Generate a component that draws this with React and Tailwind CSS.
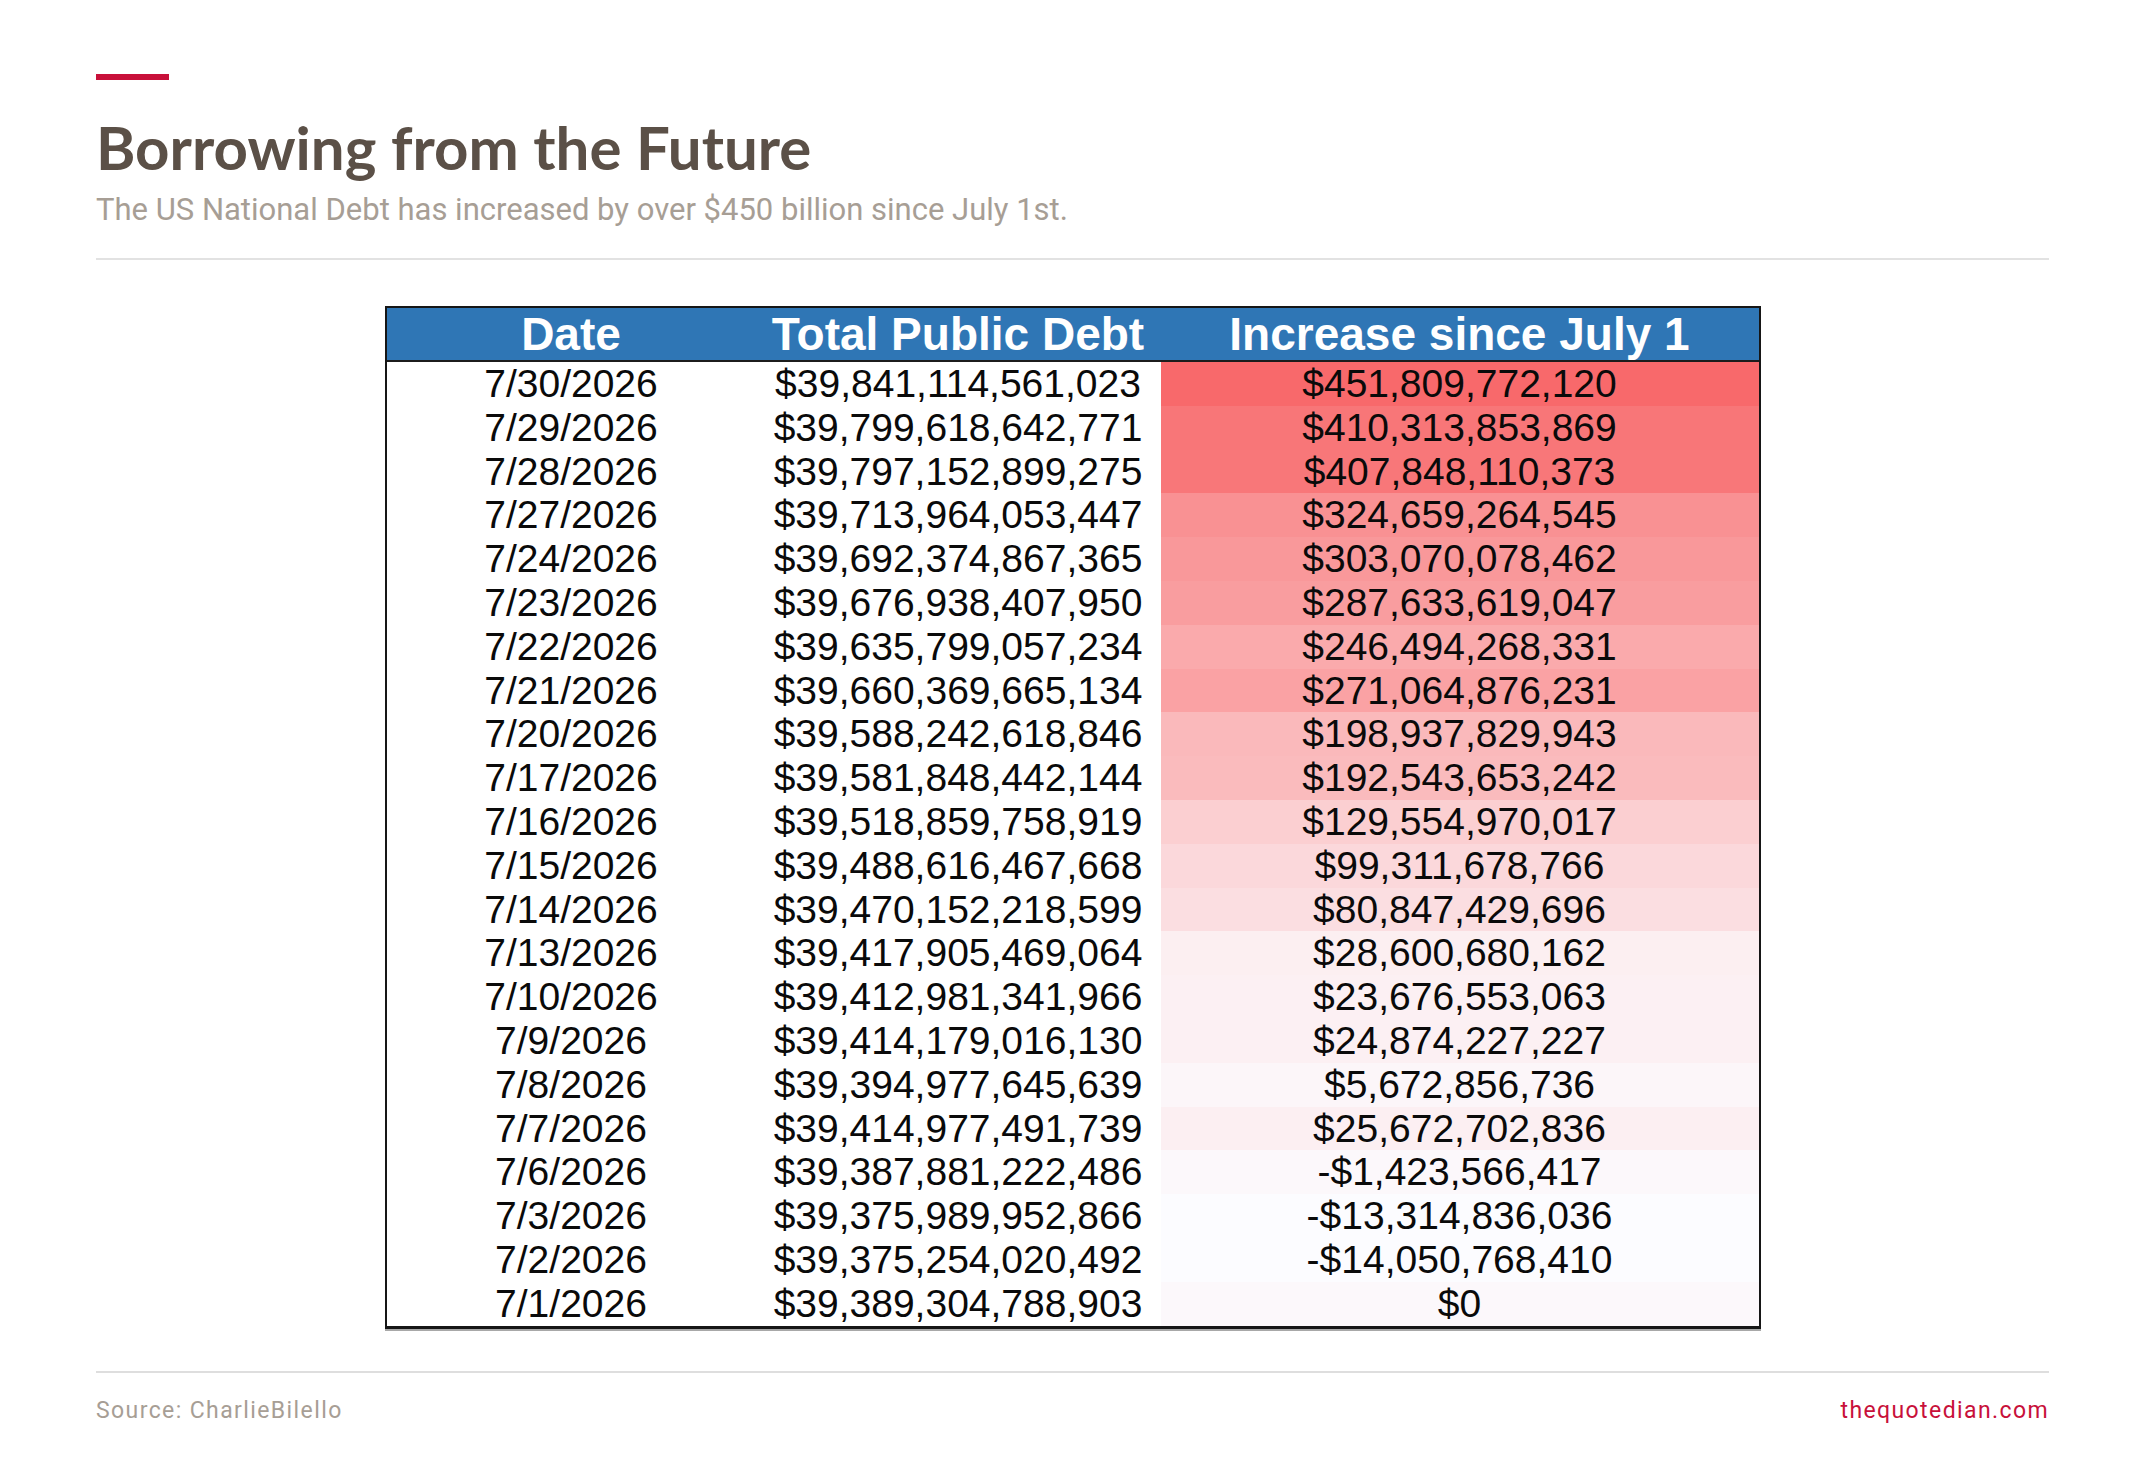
const rows = [
  ["7/30/2026", "$39,841,114,561,023", "$451,809,772,120", 451.809772120],
  ["7/29/2026", "$39,799,618,642,771", "$410,313,853,869", 410.313853869],
  ["7/28/2026", "$39,797,152,899,275", "$407,848,110,373", 407.848110373],
  ["7/27/2026", "$39,713,964,053,447", "$324,659,264,545", 324.659264545],
  ["7/24/2026", "$39,692,374,867,365", "$303,070,078,462", 303.070078462],
  ["7/23/2026", "$39,676,938,407,950", "$287,633,619,047", 287.633619047],
  ["7/22/2026", "$39,635,799,057,234", "$246,494,268,331", 246.494268331],
  ["7/21/2026", "$39,660,369,665,134", "$271,064,876,231", 271.064876231],
  ["7/20/2026", "$39,588,242,618,846", "$198,937,829,943", 198.937829943],
  ["7/17/2026", "$39,581,848,442,144", "$192,543,653,242", 192.543653242],
  ["7/16/2026", "$39,518,859,758,919", "$129,554,970,017", 129.554970017],
  ["7/15/2026", "$39,488,616,467,668", "$99,311,678,766", 99.311678766],
  ["7/14/2026", "$39,470,152,218,599", "$80,847,429,696", 80.847429696],
  ["7/13/2026", "$39,417,905,469,064", "$28,600,680,162", 28.600680162],
  ["7/10/2026", "$39,412,981,341,966", "$23,676,553,063", 23.676553063],
  ["7/9/2026", "$39,414,179,016,130", "$24,874,227,227", 24.874227227],
  ["7/8/2026", "$39,394,977,645,639", "$5,672,856,736", 5.672856736],
  ["7/7/2026", "$39,414,977,491,739", "$25,672,702,836", 25.672702836],
  ["7/6/2026", "$39,387,881,222,486", "-$1,423,566,417", -1.423566417],
  ["7/3/2026", "$39,375,989,952,866", "-$13,314,836,036", -13.314836036],
  ["7/2/2026", "$39,375,254,020,492", "-$14,050,768,410", -14.05076841],
  ["7/1/2026", "$39,389,304,788,903", "$0", 0],
];

const max = 451.809772120;
const min = -14.05076841;

// excel style two colour scale: white -> red
function heat(v) {
  const t = (v - min) / (max - min);
  const r = Math.round(252 - 4 * t);
  const g = Math.round(252 - 147 * t);
  const b = Math.round(255 - 148 * t);
  return `rgb(${r}, ${g}, ${b})`;
}

function DebtTable() {
  return (
    <div className="border-2 border-b-[3px] border-[#161616] shadow-[0_2px_0_#a8a8a8] font-['Liberation_Sans',Arial,sans-serif]">
      <div className="grid grid-cols-[373px_401px_598px] bg-[#2f76b5] border-b-2 border-[#1c1c1c] text-white font-bold text-[46px] leading-[52px] text-center">
        <div className="pr-1">Date</div>
        <div className="pr-1">Total Public Debt</div>
        <div>Increase since July 1</div>
      </div>
      {rows.map(([date, total, inc, v]) => (
        <div
          key={date}
          className="grid grid-cols-[373px_401px_598px] h-[43.8px] text-[39px] leading-[43.8px] text-center text-[#0a0a0a]"
        >
          <div className="bg-white pr-1">{date}</div>
          <div className="bg-white pr-1">{total}</div>
          <div style={{ backgroundColor: heat(v) }}>{inc}</div>
        </div>
      ))}
    </div>
  );
}

export default function App() {
  return (
    <div className="min-h-screen bg-white">
      <div className="px-24 pt-[74px] pb-10">
        <div className="h-1.5 w-[73px] bg-[#c8103a]" />
        <h1 className="mt-[37px] text-[60px] leading-none font-bold text-[#5b5047] font-['Lato',sans-serif]">
          Borrowing from the Future
        </h1>
        <p className="mt-[17px] text-[31px] leading-none text-[#a79e95] font-['Roboto',sans-serif]">
          The US National Debt has increased by over $450 billion since July 1st.
        </p>
        <div className="mt-[33px] h-0.5 bg-[#e2e2e2]" />

        <div className="mt-[46px] flex justify-center">
          <DebtTable />
        </div>

        <div className="mt-[42px] h-0.5 bg-[#dedede]" />
        <div className="mt-[26px] flex justify-between text-[23px] leading-none tracking-[1.4px] font-['Roboto',sans-serif]">
          <span className="text-[#a79e95]">Source: CharlieBilello</span>
          <span className="text-[#c8103a]">thequotedian.com</span>
        </div>
      </div>
    </div>
  );
}
